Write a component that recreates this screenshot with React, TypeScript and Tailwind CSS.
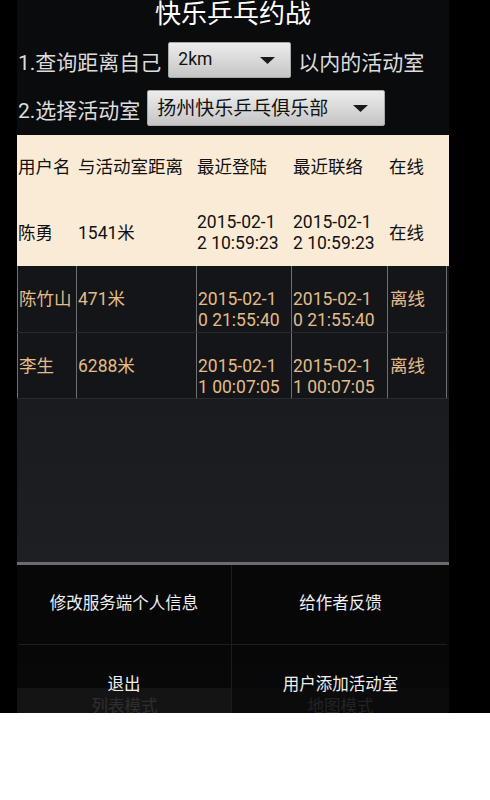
import React from "react";

function Tri() {
  return (
    <svg width="15" height="7" viewBox="0 0 15 7" className="shrink-0">
      <path d="M0 0 L15 0 L7.5 7 Z" fill="#1a1a1a" />
    </svg>
  );
}

type Row = { name: string; dist: string; d1: [string, string]; d2: [string, string]; online: string };

const darkRows: Row[] = [
  { name: "陈竹山", dist: "471米", d1: ["2015-02-1", "0 21:55:40"], d2: ["2015-02-1", "0 21:55:40"], online: "离线" },
  { name: "李生", dist: "6288米", d1: ["2015-02-1", "1 00:07:05"], d2: ["2015-02-1", "1 00:07:05"], online: "离线" },
];

export default function App() {
  return (
    <div className="w-[490px] h-[713px] bg-black relative overflow-hidden font-['Roboto','Noto_Sans_CJK_SC',sans-serif]">
      <div className="ml-[17px] w-[432px] h-full flex flex-col bg-[#0a0b0c]">
        {/* title */}
        <div className="h-[28px] flex items-center justify-center text-white text-[26px] leading-none">快乐乒乓约战</div>

        {/* row 1 */}
        <div className="mt-[14px] h-[36px] flex items-center gap-[7px] pl-px text-[21px] leading-none text-[#dcdcdc]">
          <span className="mt-[6px]">1.查询距离自己</span>
          <div className="w-[123px] h-[36px] flex items-center justify-between pl-[9px] pr-[15px] border border-[#a9a9a9] rounded-[2px] bg-gradient-to-b from-[#ededed] to-[#c5c5c5] text-[#111] text-[17.5px]">
            <span>2km</span>
            <Tri />
          </div>
          <span className="mt-[6px]">以内的活动室</span>
        </div>

        {/* row 2 */}
        <div className="mt-[12px] h-[36px] flex items-center gap-[7px] pl-px text-[21px] leading-none text-[#dcdcdc]">
          <span className="mt-[6px]">2.选择活动室</span>
          <div className="w-[238px] h-[36px] flex items-center justify-between pl-[9px] pr-[16px] border border-[#a9a9a9] rounded-[2px] bg-gradient-to-b from-[#ededed] to-[#c5c5c5] text-[#111] text-[19px]">
            <span className="mt-[1px]">扬州快乐乒乓俱乐部</span>
            <Tri />
          </div>
        </div>

        {/* table */}
        <div className="mt-[9px] text-[17.5px]">
          <div className="grid grid-cols-[59px_120px_95px_96px_60px] h-[65px] items-center bg-[#faebd7] text-[#111] leading-[21px]">
            <div className="pl-px">用户名</div>
            <div className="pl-[2px]">与活动室距离</div>
            <div className="pl-px">最近登陆</div>
            <div className="pl-[2px]">最近联络</div>
            <div className="pl-[2px]">在线</div>
          </div>
          <div className="grid grid-cols-[59px_120px_95px_96px_60px] h-[66px] items-center bg-[#faebd7] text-[#111] leading-[21px]">
            <div className="pl-px">陈勇</div>
            <div className="pl-[2px]">1541米</div>
            <div className="pl-px">
              <div>2015-02-1</div>
              <div>2 10:59:23</div>
            </div>
            <div className="pl-[2px]">
              <div>2015-02-1</div>
              <div>2 10:59:23</div>
            </div>
            <div className="pl-[2px]">在线</div>
          </div>
          {darkRows.map((r, i) => (
            <div
              key={i}
              className={
                "grid grid-cols-[59px_120px_95px_96px_60px] bg-[#131518] border-b border-[#2a2b2e] text-[#e2bd88] leading-[21px] " +
                (i === 0 ? "h-[67px]" : "h-[66px]")
              }
            >
              <div className="border-l border-[#707070] pl-px pt-[23px]">{r.name}</div>
              <div className="border-l border-[#707070] pl-px pt-[23px]">{r.dist}</div>
              <div className="border-l border-[#707070] pl-px pt-[23px]">
                <div>{r.d1[0]}</div>
                <div>{r.d1[1]}</div>
              </div>
              <div className="border-l border-[#707070] pl-px pt-[23px]">
                <div>{r.d2[0]}</div>
                <div>{r.d2[1]}</div>
              </div>
              <div className="border-l border-r border-[#707070] pl-[2px] pt-[23px]">{r.online}</div>
            </div>
          ))}
        </div>

        {/* filler */}
        <div className="flex-1 bg-gradient-to-b from-[#191b1e] to-[#202226]" />

        {/* tab bar (under menu) */}
        <div className="h-[25px] grid grid-cols-[215px_217px] text-[16.5px] leading-[17px]">
          <div className="bg-[#565656] text-[#c0c0c0] flex justify-center pt-[10px]">列表模式</div>
          <div className="bg-[#2e2e2e] text-[#939393] flex justify-center pt-[10px]">地图模式</div>
        </div>
      </div>

      {/* options menu overlay */}
      <div className="absolute left-[17px] top-[562px] w-[432px] h-[162px] border-t-[3px] border-[#6b6c6e] bg-black/[0.76] text-[16.5px] leading-none text-[#efefef]">
        <div className="grid grid-cols-[215px_217px] h-[79px]">
          <div className="border-r border-[#1b1c1e] flex items-center justify-center">修改服务端个人信息</div>
          <div className="flex items-center justify-center">给作者反馈</div>
        </div>
        <div className="mx-[2px] h-px bg-[#1d1e20]" />
        <div className="grid grid-cols-[215px_217px] h-[80px]">
          <div className="border-r border-[#1b1c1e] flex items-center justify-center">退出</div>
          <div className="flex items-center justify-center">用户添加活动室</div>
        </div>
      </div>
    </div>
  );
}
